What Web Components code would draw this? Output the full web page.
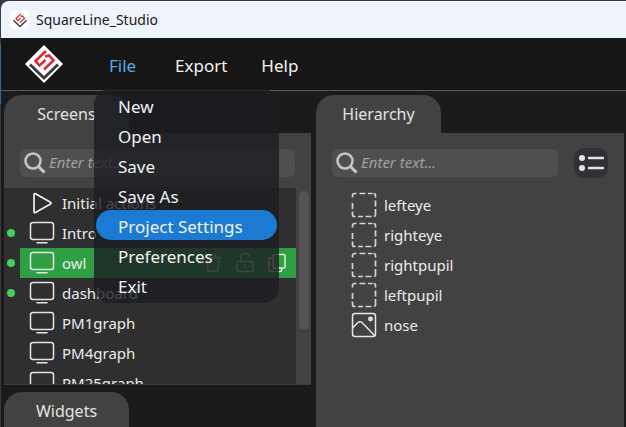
<!DOCTYPE html>
<html lang="en">
<head>
<meta charset="utf-8">
<title>SquareLine_Studio</title>
<style>
  html, body { margin: 0; height: 100%; }
  body { background: #1b1b1b; overflow: hidden; font-family: "Noto Sans", sans-serif; color: #ececec; }
</style>
</head>
<body>
<app-window></app-window>

<script>
const ICONS = {
  logo: `<svg viewBox="0 0 38 38"><path d="M19 0 38 19 19 38 0 19Z" fill="#fff"/>
    <path d="M21 6 10.500 16 14.500 20.500 20.500 15M20 11.500 24 10.500 28.500 15.500 19 24.500" fill="none" stroke="#dc2832" stroke-width="2.600"/>
    <path d="M5 19.500 19 33 33 19.500" fill="none" stroke="#3c3c40" stroke-width="3"/></svg>`,
  search: `<svg viewBox="0 0 22 22"><circle cx="9" cy="9" r="7.500" fill="none" stroke="#c8c8c8" stroke-width="2.500"/><path d="M14.500 14.500 20.500 20.500" stroke="#c8c8c8" stroke-width="3"/></svg>`,
  play: `<svg viewBox="0 0 26 26"><path d="M5 4.500v17a1 1 0 0 0 1.500 1L21.500 14a1 1 0 0 0 0-1.800L6.500 3.700A1 1 0 0 0 5 4.500Z" fill="none" stroke="#f0f0f0" stroke-width="1.700" stroke-linejoin="round"/></svg>`,
  screen: `<svg viewBox="0 0 26 26"><rect x="1.500" y="2.500" width="23" height="17" rx="2.500" fill="none" stroke="#e4e4e4" stroke-width="1.500"/><path d="M8 22.700h10" stroke="#e4e4e4" stroke-width="1.600" stroke-linecap="round"/></svg>`,
  dashed: `<svg viewBox="0 0 26 26"><path d="M1.500 5.500v-2a2 2 0 0 1 2-2h2M8.500 1.500h6M17 1.500h4.500M22.500 1.500a2 2 0 0 1 2 2v2M24.500 8.500v6M24.500 17v5a2 2 0 0 1-1.500 2.500M20.500 24.500h-6M12 24.500H7M4.500 24.500h-1a2 2 0 0 1-2-2v-3M1.500 17v-6" fill="none" stroke="#d4d4d4" stroke-width="1.700"/></svg>`,
  image: `<svg viewBox="0 0 26 26" fill="none" stroke="#e8e8e8" stroke-width="1.500"><rect x="1.500" y="1.500" width="23" height="23" rx="2.500"/><path d="M1.500 16 7 10.500q2-1.500 4 0L24 24"/><circle cx="19.500" cy="7" r="1.700" fill="#ccc"/></svg>`,
  trash: `<svg viewBox="0 0 20 20" fill="none" stroke="#d8d8d8" stroke-width="1.500"><path d="M2 4.500h16M7 4V2h6v2M4 5l1 13h10l1-13"/></svg>`,
  lock: `<svg viewBox="0 0 20 20" fill="none" stroke="#d8d8d8" stroke-width="1.500"><rect x="2" y="8.500" width="16" height="10" rx="1.500"/><path d="M6 8V5a4 4 0 0 1 8-1.500M10 11.500v4"/></svg>`,
  copy: `<svg viewBox="0 0 20 20" fill="none" stroke="#e4e4e4" stroke-width="1.500"><rect x="6" y="1.500" width="12" height="13.500" rx="1"/><path d="M6 5H3a1 1 0 0 0-1 1v11.500a1 1 0 0 0 1 1h10.500a1 1 0 0 0 1-1V15"/></svg>`,
  list: `<svg viewBox="0 0 26 20"><g fill="#e4e4e4"><circle cx="4" cy="5" r="3"/><circle cx="4" cy="15" r="3"/></g><path d="M11 5h14M11 15h14" stroke="#e4e4e4" stroke-width="2.600" stroke-linecap="round"/></svg>`
};

const BASE = `<style>
  * { box-sizing: border-box; }
  button, input { font: inherit; color: inherit; margin: 0; border: 0; padding: 0; background: none; text-align: left; }
</style>`;

class BaseElement extends HTMLElement {
  connectedCallback() {
    if (!this.shadowRoot) this.attachShadow({ mode: "open" }).innerHTML = BASE + this.render();
  }
  attr(name) { return this.getAttribute(name) || ""; }
}

customElements.define("ui-icon", class extends BaseElement {
  render() {
    return `<style>:host { display: block; flex: none; width: 26px; height: 26px; } svg { display: block; width: 100%; height: 100%; }</style>${ICONS[this.attr("name")]}`;
  }
});

customElements.define("title-bar", class extends BaseElement {
  render() {
    return `<style>
      :host { display: flex; align-items: center; gap: 7px; height: 37px; flex: none; padding-left: 9px; background: #eff3fb; border-radius: 8px 0 0 0; color: #202020; font-size: 14px; }
      .badge { display: grid; place-items: center; width: 19px; height: 19px; border-radius: 4px; background: #fff; }
      .badge ui-icon { width: 18px; height: 18px; }
    </style><span class="badge"><ui-icon name="logo"></ui-icon></span><span><slot></slot></span>`;
  }
});

customElements.define("menu-item", class extends BaseElement {
  render() {
    return `<style>
      :host { display: block; }
      button { display: block; width: 100%; height: 30px; padding: 4px 22px 0; line-height: 26px; border-radius: 16px; color: #f2f2f2; white-space: nowrap; }
      :host([active]) button { background: #1b7bd2; }
    </style><button type="button" role="menuitem"><slot></slot></button>`;
  }
});

customElements.define("drop-menu", class extends BaseElement {
  render() {
    const open = this.hasAttribute("open");
    return `<style>
      :host { display: block; position: relative; }
      .head { min-width: 32px; line-height: 24px; color: #f2f2f2; }
      :host([open]) .head { color: #5ba6ea; }
      .pop { position: absolute; z-index: 2; top: 35px; left: -15px; width: 185px; padding: 1px 2px 3px; border-radius: 16px; background: rgba(27,29,34,.8); }
    </style><button class="head" type="button" aria-haspopup="menu" aria-expanded="${open}">${this.attr("label")}</button>
    ${open ? `<div class="pop" role="menu"><slot></slot></div>` : ""}`;
  }
});

customElements.define("menu-bar", class extends BaseElement {
  render() {
    return `<style>
      :host { display: flex; align-items: center; height: 53px; flex: none; padding: 0 24px; background: #161616; border-bottom: 1px solid #5a5a5a; font-size: 17px; }
      ui-icon { width: 38px; height: 38px; }
      nav { display: flex; gap: 34px; margin: 3px 0 0 46px; }
    </style><ui-icon name="logo"></ui-icon><nav aria-label="Main"><slot></slot></nav>`;
  }
});

customElements.define("dock-panel", class extends BaseElement {
  render() {
    return `<style>
      :host { display: flex; flex-direction: column; align-items: flex-start; min-width: 0; min-height: 0; font-size: 16px; }
      .tab { flex: none; width: 125px; height: 38px; text-align: center; border-radius: 18px 18px 0 0; background: #424242; color: #e2e2e2; }
      .body { flex: 1; align-self: stretch; min-height: 0; display: flex; flex-direction: column; background: #424242; }
      :host([collapsed]) .body { display: none; }
    </style><button class="tab" type="button">${this.attr("label")}</button><div class="body"><slot></slot></div>`;
  }
});

customElements.define("search-row", class extends BaseElement {
  render() {
    return `<style>
      :host { box-sizing: border-box; display: flex; align-items: center; gap: 16px; height: 55px; padding: 5px 16px 0; flex: none; }
      label { flex: 1; min-width: 0; display: flex; align-items: center; gap: 3px; height: 28px; padding-left: 4px; border-radius: 6px; background: #4f4f4f; }
      label ui-icon { width: 22px; height: 22px; }
      input { flex: 1; min-width: 0; height: 28px; padding-bottom: 2px; outline: 0; font-size: 15px; font-style: italic; }
      input::placeholder { color: #a0a0a0; opacity: 1; }
    </style><label><ui-icon name="search"></ui-icon><input type="text" aria-label="Search ${this.attr("for-name")}" placeholder="Enter text..."></label><slot></slot>`;
  }
});

customElements.define("icon-button", class extends BaseElement {
  render() {
    return `<style>
      :host { display: block; }
      button { display: grid; place-items: center; width: 34px; height: 30px; border-radius: 10px; background: #303136; }
      ui-icon { width: 26px; height: 20px; }
    </style><button type="button" aria-label="${this.attr("label")}"><ui-icon name="${this.attr("icon")}"></ui-icon></button>`;
  }
});

customElements.define("tree-row", class extends BaseElement {
  render() {
    const tools = this.hasAttribute("selected")
      ? ["trash", "lock", "copy"].map(n => `<button class="tool" type="button" aria-label="${n}"><ui-icon name="${n}"></ui-icon></button>`).join("") : "";
    return `<style>
      :host { display: flex; align-items: center; height: 30px; font-size: 15px; flex: none; }
      .dot { width: 8px; height: 8px; margin: 0 5px 0 3px; border-radius: 50%; flex: none; }
      :host([linked]) .dot { background: #45cf5e; }
      .line { flex: 1; min-width: 0; display: flex; align-items: center; height: 30px; padding: 0 9px; }
      :host([selected]) .line { background: #2e9f43; }
      .name { flex: 1; display: flex; align-items: center; gap: 7px; height: 30px; }
      .tool { margin-left: 12px; }
      .tool ui-icon { width: 20px; height: 20px; }
    </style><span class="dot"></span><div class="line"><button class="name" type="button"><ui-icon name="${this.attr("icon")}"></ui-icon><span><slot></slot></span></button>${tools}</div>`;
  }
});

customElements.define("scroll-list", class extends BaseElement {
  render() {
    return `<style>
      :host { display: flex; flex: 1; min-height: 0; border-bottom: 1px solid #3d3d3d; }
      .rows { flex: 1; overflow: hidden; display: flex; flex-direction: column; background: #2f2f2f; }
      .track { width: 15px; padding: 3px 2px 0 3px; background: #424242; }
      .thumb { height: 72%; border-radius: 5px; background: #545454; }
    </style><div class="rows"><slot></slot></div><div class="track"><div class="thumb"></div></div>`;
  }
});

customElements.define("app-window", class extends BaseElement {
  render() {
    return `<style>
      :host { box-sizing: border-box; display: flex; flex-direction: column; height: 100vh; padding: 1px 0 0 1px; background: linear-gradient(#2a6ea5, #2a6ea5) 0 44px / 1px 60px no-repeat, #3a3a3c; }
      main { flex: 1; min-height: 0; display: grid; grid-template-columns: minmax(0, 307fr) minmax(0, 308fr); grid-template-rows: minmax(0, 1fr); gap: 5px; padding: 4px 2px 0 3px; background: #1b1b1b; }
      .left { display: flex; flex-direction: column; gap: 7px; min-height: 0; }
      .grow { flex: 1; }
      .bottom { height: 35px; }
      .tree { padding: 2px 0 0 10px; }
    </style>
    <title-bar>SquareLine_Studio</title-bar>
    <menu-bar>
      <drop-menu label="File" open>
        <menu-item>New</menu-item><menu-item>Open</menu-item><menu-item>Save</menu-item><menu-item>Save As</menu-item>
        <menu-item active>Project Settings</menu-item><menu-item>Preferences</menu-item><menu-item>Exit</menu-item>
      </drop-menu>
      <drop-menu label="Export"></drop-menu>
      <drop-menu label="Help"></drop-menu>
    </menu-bar>
    <main>
      <div class="left">
        <dock-panel class="grow" label="Screens">
          <search-row for-name="screens"></search-row>
          <scroll-list>
            <tree-row icon="play">Initial actions</tree-row>
            <tree-row icon="screen" linked>Intro</tree-row>
            <tree-row icon="screen" linked selected>owl</tree-row>
            <tree-row icon="screen" linked>dashboard</tree-row>
            <tree-row icon="screen">PM1graph</tree-row>
            <tree-row icon="screen">PM4graph</tree-row>
            <tree-row icon="screen">PM25graph</tree-row>
          </scroll-list>
        </dock-panel>
        <dock-panel class="bottom" label="Widgets" collapsed></dock-panel>
      </div>
      <dock-panel label="Hierarchy">
        <search-row for-name="hierarchy"><icon-button label="List view" icon="list"></icon-button></search-row>
        <div class="tree">
          <tree-row icon="dashed">lefteye</tree-row>
          <tree-row icon="dashed">righteye</tree-row>
          <tree-row icon="dashed">rightpupil</tree-row>
          <tree-row icon="dashed">leftpupil</tree-row>
          <tree-row icon="image">nose</tree-row>
        </div>
      </dock-panel>
    </main>`;
  }
});
</script>
</body>
</html>
